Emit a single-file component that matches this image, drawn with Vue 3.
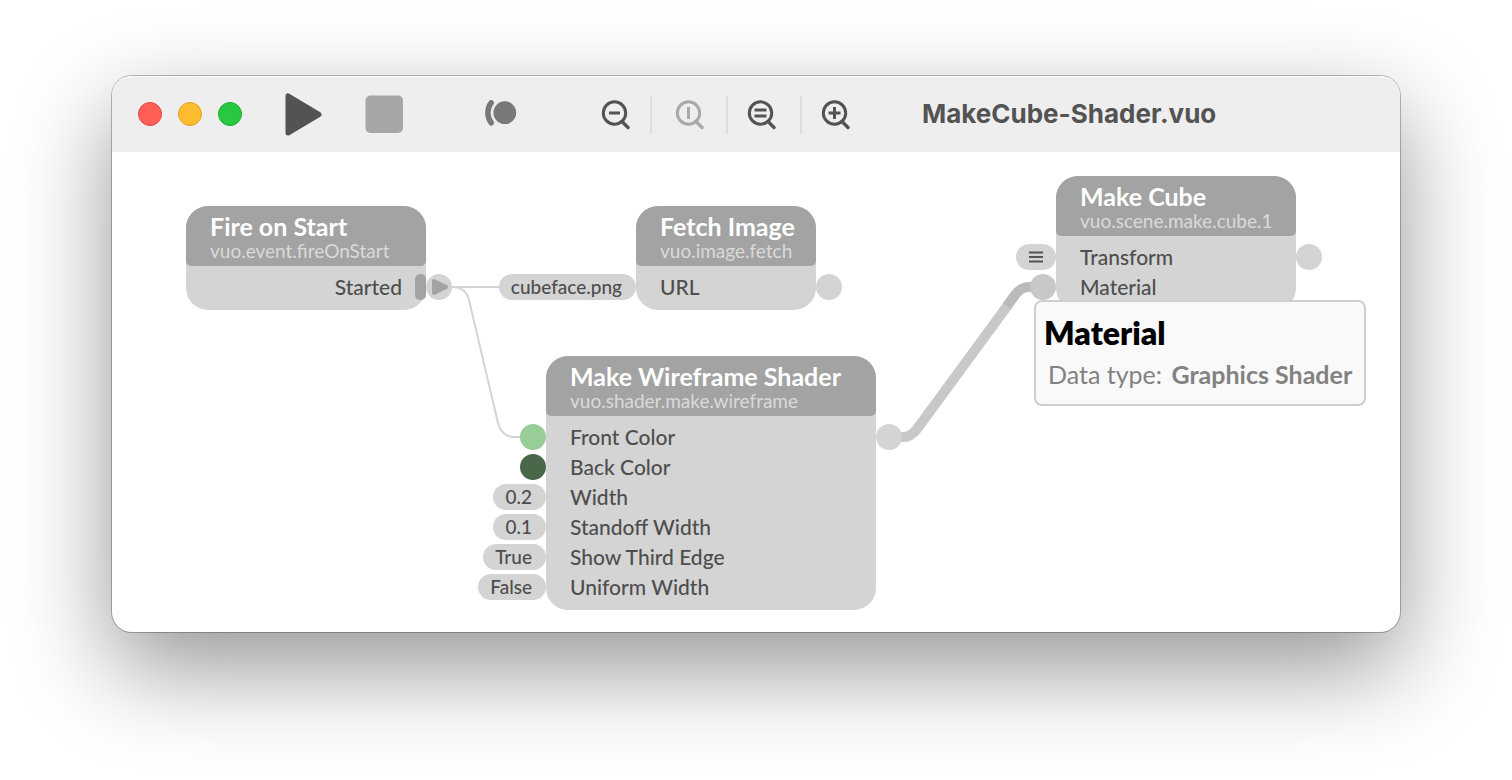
<script setup>
const zoomButtons = [
  { id: 'out', label: 'Zoom out', glyph: 'M9 14h11' },
  { id: 'actual', label: 'Actual size', glyph: 'M14.5 8v12', disabled: true },
  { id: 'fit', label: 'Zoom to fit', glyph: 'M8.500 11h12M8.500 17h12' },
  { id: 'in', label: 'Zoom in', glyph: 'M8.500 14h12M14.500 8v12' },
]

const nodes = [
  {
    id: 'fire', x: 74, y: 54, width: 240,
    title: 'Fire on Start', type: 'vuo.event.fireOnStart',
    rows: [{ label: 'Started', output: true }],
  },
  {
    id: 'fetch', x: 524, y: 54, width: 180,
    title: 'Fetch Image', type: 'vuo.image.fetch',
    rows: [{ label: 'URL', value: 'cubeface.png', out: true }],
  },
  {
    id: 'shader', x: 434, y: 204, width: 330,
    title: 'Make Wireframe Shader', type: 'vuo.shader.make.wireframe',
    rows: [
      { label: 'Front Color', port: 'front', out: true },
      { label: 'Back Color', port: 'back' },
      { label: 'Width', value: '0.2' },
      { label: 'Standoff Width', value: '0.1' },
      { label: 'Show Third Edge', value: 'True' },
      { label: 'Uniform Width', value: 'False' },
    ],
  },
  {
    id: 'cube', x: 944, y: 24, width: 240,
    title: 'Make Cube', type: 'vuo.scene.make.cube.1',
    rows: [
      { label: 'Transform', list: true, out: true },
      { label: 'Material', port: 'hover' },
    ],
  },
]

const place = (n) => ({ left: n.x + 'px', top: n.y + 'px', width: n.width + 'px' })
</script>

<template>
  <div class="desktop">
    <main class="window">
      <header class="toolbar">
        <div class="lights">
          <button class="light close" aria-label="Close"></button>
          <button class="light minimize" aria-label="Minimize"></button>
          <button class="light maximize" aria-label="Zoom window"></button>
        </div>
        <button class="tool run" aria-label="Run">
          <svg width="38" height="44" viewBox="0 0 38 44"><path d="M3 4V41L34 22.500Z" fill="#535353" stroke="#535353" stroke-width="5" stroke-linejoin="round" /></svg>
        </button>
        <button class="tool stop" aria-label="Stop" disabled>
          <svg width="38" height="38" viewBox="0 0 38 38"><rect x="0.500" y="0.500" width="37.500" height="37.500" rx="5" fill="#a6a6a6" /></svg>
        </button>
        <button class="tool events" aria-label="Show events">
          <svg width="32" height="28" viewBox="0 0 32 28">
            <circle cx="19.800" cy="12.700" r="11.400" fill="#797979" />
            <path d="M6.200 2.800Q2.900 7 2.900 12.800T6.200 22.800" fill="none" stroke="#797979" stroke-width="5.500" stroke-linecap="round" />
          </svg>
        </button>
        <div class="zooms">
          <button v-for="b in zoomButtons" :key="b.id" class="tool zoom" :class="b.id" :aria-label="b.label" :disabled="b.disabled">
            <svg width="30" height="32" viewBox="0 0 30 32" fill="none" stroke="currentColor" stroke-width="3">
              <circle cx="14.500" cy="14" r="11.200" />
              <path d="M22 22.500l6 6" stroke-width="3.400" stroke-linecap="round" />
              <path :d="b.glyph" />
            </svg>
          </button>
        </div>
        <h1 class="title">MakeCube-Shader.vuo</h1>
      </header>

      <section class="canvas" aria-label="Composition">
        <svg class="wires" width="1288" height="480" viewBox="0 0 1288 480" fill="none">
          <g stroke="#d4d4d4" stroke-width="2">
            <path d="M340 135H390" />
            <path d="M340 135Q354 135 357 148L386 271Q390 285 402 285H409" />
          </g>
          <path d="M788 285H791Q799 285 805 277L896 153" stroke="#c8c8c8" stroke-width="10" />
          <path d="M895 154L903 143Q909 135 917 135H922" stroke="#bababa" stroke-width="10" />
        </svg>

        <article v-for="n in nodes" :key="n.id" class="node" :style="place(n)">
          <header class="head">
            <h2 class="name">{{ n.title }}</h2>
            <p class="type">{{ n.type }}</p>
          </header>
          <ul class="rows">
            <li v-for="r in n.rows" :key="r.label" class="row" :class="{ output: r.output }">
              <button v-if="r.value" class="pill in" :aria-label="r.label + ' value'">{{ r.value }}</button>
              <button v-if="r.list" class="pill in list" aria-label="Edit transform">
                <svg width="14" height="12" viewBox="0 0 14 12"><path d="M0 1.500h14M0 6h14M0 10.500h14" stroke="#555" stroke-width="2" /></svg>
              </button>
              <span v-if="r.port" class="port in" :class="r.port"></span>
              <span>{{ r.label }}</span>
              <span v-if="r.out" class="port out"></span>
              <template v-if="r.output">
                <span class="door"></span>
                <button class="port out trigger" aria-label="Fire event">
                  <svg width="26" height="26" viewBox="0 0 26 26"><path d="M8 7V19L20 13Z" fill="#a3a3a3" stroke="#a3a3a3" stroke-width="4" stroke-linejoin="round" /></svg>
                </button>
              </template>
            </li>
          </ul>
        </article>

        <aside class="tooltip" role="tooltip">
          <h3 class="tip-name">Material</h3>
          <p class="tip-type">Data type: <strong>Graphics Shader</strong></p>
        </aside>
      </section>
    </main>
  </div>
</template>

<style>
body {
  background: #fff;
}
</style>

<style scoped>
.desktop {
  min-height: 100vh;
  padding: 76px 112px;
  box-sizing: border-box;
}
.window {
  border-radius: 20px;
  background: #fff;
  font-family: Lato, "Open Sans", sans-serif;
  color: #4e4e4e;
  box-shadow: 0 0 0 1px rgba(0, 0, 0, 0.26), 0 36px 96px rgba(0, 0, 0, 0.42);
}
h1, h2, h3, p, ul {
  margin: 0;
  padding: 0;
}
button {
  border: 0;
  padding: 0;
  background: none;
  font: inherit;
  color: inherit;
}
svg {
  display: block;
}
.toolbar {
  display: flex;
  align-items: center;
  height: 76px;
  padding: 0 26px;
  box-sizing: border-box;
  border-radius: 20px 20px 0 0;
  background: #eee;
  box-shadow: inset 0 1px 0 #fafafa;
}
.lights {
  display: flex;
  gap: 16px;
}
.light {
  width: 24px;
  height: 24px;
  border-radius: 50%;
  border: 1px solid;
}
.close { background: #ff5f57; border-color: #e2463f; }
.minimize { background: #febc2e; border-color: #e0a123; }
.maximize { background: #28c840; border-color: #1dad2c; }
.tool {
  flex: none;
}
.run { margin-left: 43px; }
.stop { margin-left: 42px; }
.events { margin-left: 82px; }
.zooms {
  display: flex;
  align-items: center;
  height: 38px;
  padding-top: 2px;
  margin-left: 83px;
}
.zoom {
  height: 38px;
  padding: 0 22px 0 18px;
  color: #535353;
}
.zoom + .zoom {
  border-left: 2px solid #dedede;
}
.zoom.out {
  padding: 0 20px 0 0;
}
.zoom.actual {
  padding-left: 22px;
}
.zoom.fit {
  padding-right: 24px;
}
.zoom.in {
  padding-right: 0;
}
.zoom:disabled { color: #a9a9a9; }
.title {
  margin-left: 72px;
  font: 700 26px/32px Inter, sans-serif;
  color: #535353;
  white-space: nowrap;
}
.canvas {
  position: relative;
  min-height: 480px;
}
.wires {
  position: absolute;
  top: 0;
  left: 0;
}
.node {
  position: absolute;
  border-radius: 22px;
  background: #d4d4d4;
}
.head {
  height: 60px;
  padding: 6px 0 0 24px;
  box-sizing: border-box;
  border-radius: 22px 22px 5px 5px;
  background: #a3a3a3;
  white-space: nowrap;
}
.name {
  font-size: 25px;
  line-height: 29px;
  font-weight: 700;
  color: #fff;
}
.type {
  font-size: 19px;
  line-height: 20px;
  color: #dadada;
}
.rows {
  list-style: none;
  padding: 6px 0 8px;
}
.row {
  position: relative;
  display: flex;
  align-items: center;
  height: 30px;
  padding: 0 24px;
  font-size: 21px;
  line-height: 30px;
  font-weight: 500;
  white-space: nowrap;
}
.output {
  justify-content: flex-end;
}
.pill,
.port {
  position: absolute;
  top: 2px;
  height: 26px;
  border-radius: 13px;
  background: #d4d4d4;
}
.in { right: 100%; }
.out { left: 100%; }
.pill {
  padding: 0 14px 0 12px;
  font-size: 19px;
  line-height: 26px;
}
.list {
  padding: 0 13px;
}
.port {
  width: 26px;
}
.front { background: #99cd98; }
.back { background: #4a674a; }
.hover { background: #c8c8c8; }
.door {
  position: absolute;
  top: 2px;
  right: 0;
  width: 11px;
  height: 26px;
  border-radius: 5px;
  background: #a3a3a3;
}
.tooltip {
  position: absolute;
  left: 922px;
  top: 148px;
  padding: 10px 12px 12px 8px;
  border: 2px solid #cfcfcf;
  border-radius: 8px;
  background: #f9f9f9;
  white-space: nowrap;
}
.tip-name {
  font-size: 32px;
  line-height: 42px;
  font-weight: 800;
  color: #000;
}
.tip-type {
  padding: 2px 0 0 4px;
  font-size: 25px;
  line-height: 36px;
  color: #828282;
}
.tip-type strong {
  margin-left: 3px;
}
</style>
